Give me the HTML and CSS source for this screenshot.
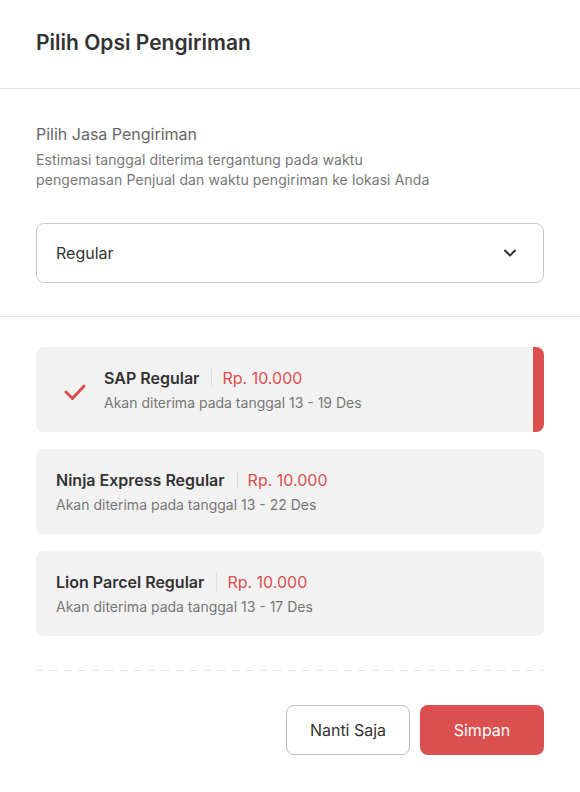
FILE: index.html
```html
<!DOCTYPE html>
<html lang="id">
<head>
<meta charset="utf-8">
<title>Pilih Opsi Pengiriman</title>
<link rel="stylesheet" href="styles.css">
</head>
<body>
<div class="modal">
  <header class="header">
    <h1 class="title">Pilih Opsi Pengiriman</h1>
  </header>
  <section class="section">
    <h2 class="label">Pilih Jasa Pengiriman</h2>
    <p class="desc">Estimasi tanggal diterima tergantung pada waktu<br>pengemasan Penjual dan waktu pengiriman ke lokasi Anda</p>
    <div class="select">
      <span>Regular</span>
      <svg class="chev" width="14" height="14" viewBox="0 0 14 14"><path d="M2 4.5 L7 9.5 L12 4.5" fill="none" stroke="#333" stroke-width="2" stroke-linecap="round" stroke-linejoin="round"/></svg>
    </div>
  </section>
  <section class="list">
    <div class="card selected">
      <svg class="check" width="24" height="20" viewBox="0 0 24 20"><path d="M3 10 L9.5 16.5 L21 4" fill="none" stroke="#db4f4f" stroke-width="3" stroke-linecap="round" stroke-linejoin="round"/></svg>
      <div class="info">
        <div class="row"><span class="name">SAP Regular</span><span class="sep"></span><span class="price">Rp. 10.000</span></div>
        <div class="eta">Akan diterima pada tanggal 13 - 19 Des</div>
      </div>
    </div>
    <div class="card">
      <div class="info">
        <div class="row"><span class="name">Ninja Express Regular</span><span class="sep"></span><span class="price">Rp. 10.000</span></div>
        <div class="eta">Akan diterima pada tanggal 13 - 22 Des</div>
      </div>
    </div>
    <div class="card">
      <div class="info">
        <div class="row"><span class="name">Lion Parcel Regular</span><span class="sep"></span><span class="price">Rp. 10.000</span></div>
        <div class="eta">Akan diterima pada tanggal 13 - 17 Des</div>
      </div>
    </div>
    <div class="dash"></div>
    <div class="actions">
      <button class="btn btn-outline">Nanti Saja</button>
      <button class="btn btn-primary">Simpan</button>
    </div>
  </section>
</div>
</body>
</html>
```

FILE: styles.css
```css
* { box-sizing: border-box; }
html, body { margin: 0; padding: 0; background: #fff; }
body {
  font-family: Inter, "Noto Sans", "Liberation Sans", sans-serif;
  color: #333;
  width: 580px;
}
.header {
  height: 89px;
  display: flex;
  align-items: center;
  padding: 0 36px;
  border-bottom: 1px solid #e3e3e3;
}
.title {
  margin: 0;
  font-size: 21px;
  font-weight: 600;
  color: #333;
  line-height: 28px;
  padding-bottom: 2px;
}
.section {
  padding: 33px 36px 33px;
  border-bottom: 1px solid #e3e3e3;
}
.label {
  margin: 0;
  font-size: 16px;
  font-weight: 400;
  line-height: 24px;
  color: #666;
}
.desc {
  margin: 4px 0 0;
  font-size: 14px;
  line-height: 20px;
  color: #777;
  letter-spacing: 0.1px;
}
.select {
  margin-top: 33px;
  height: 60px;
  border: 1px solid #c8c8c8;
  border-radius: 8px;
  display: flex;
  align-items: center;
  justify-content: space-between;
  padding: 0 26px 0 19px;
  font-size: 16px;
  color: #333;
}
.chev { display: block; }
.list {
  padding: 30px 36px 0;
}
.card {
  background: #f2f2f2;
  border-radius: 8px;
  height: 85px;
  display: flex;
  align-items: center;
  padding: 0 20px;
  margin-bottom: 17px;
}
.card.selected {
  border-right: 11px solid #db4f4f;
  padding-left: 27px;
}
.check { display: block; margin-right: 17px; margin-top: 4px; }
.info { display: flex; flex-direction: column; gap: 5px; }
.row { display: flex; align-items: center; height: 22px; }
.name { font-size: 16px; font-weight: 600; color: #333; }
.sep {
  width: 1px;
  height: 18px;
  background: #dcdcdc;
  margin: 0 10px 0 12px;
}
.price { font-size: 16px; color: #db4f4f; }
.eta { font-size: 14px; line-height: 18px; color: #777; }
.dash {
  margin-top: 34px;
  height: 1px;
  background: repeating-linear-gradient(to right, #e0e0e0 0, #e0e0e0 7px, transparent 7px, transparent 14px);
}
.actions {
  display: flex;
  justify-content: flex-end;
  gap: 10px;
  margin-top: 34px;
}
.btn {
  width: 124px;
  height: 50px;
  border-radius: 8px;
  font-family: inherit;
  font-size: 16px;
  cursor: pointer;
}
.btn-outline {
  background: #fff;
  border: 1px solid #bdbdbd;
  color: #333;
}
.btn-primary {
  background: #db4f4f;
  border: none;
  color: #fff;
}
```
